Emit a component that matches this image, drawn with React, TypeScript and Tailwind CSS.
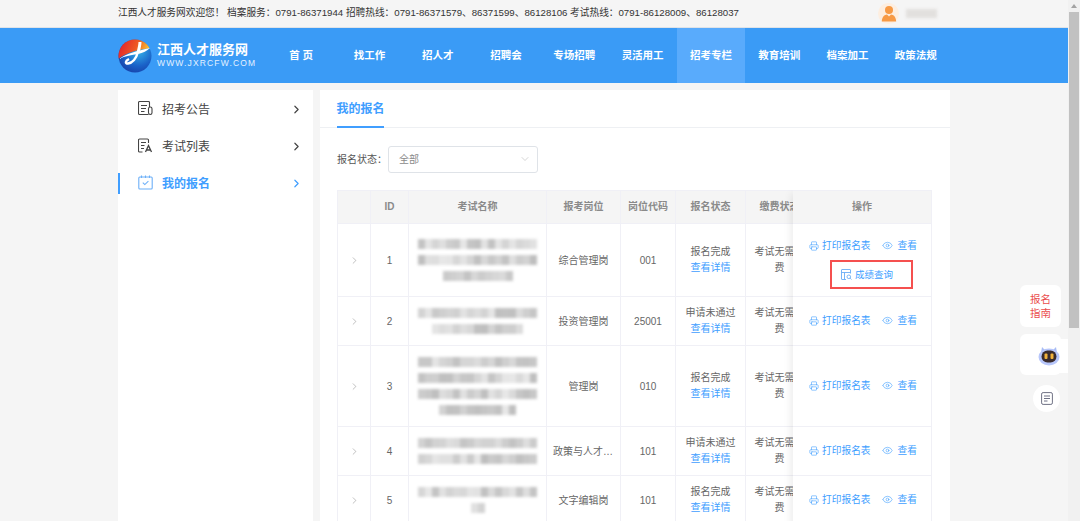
import React from "react";
import { ChevronRight, ChevronDown, Printer, Eye } from "lucide-react";

const NAV = ["首 页", "找工作", "招人才", "招聘会", "专场招聘", "灵活用工", "招考专栏", "教育培训", "档案加工", "政策法规"];

function Pixels({ width, seed }: { width: number; seed: number }) {
  const n = Math.round(width / 7);
  const cells = Array.from({ length: n }, (_, i) => {
    const v = Math.abs(Math.sin((i + 1) * 12.9898 + seed * 78.233) * 43758.5453) % 1;
    const g = Math.round(190 + v * 42);
    return `rgb(${g},${g},${g})`;
  });
  return (
    <div className="flex h-[10px] blur-[1.4px]">
      {cells.map((c, i) => (
        <div key={i} className="w-[7px] h-full" style={{ background: c }} />
      ))}
    </div>
  );
}

function Blurred({ lines, seed }: { lines: number[]; seed: number }) {
  return (
    <div className="flex flex-col items-center gap-[6px]">
      {lines.map((w, i) => (
        <Pixels key={i} width={w} seed={seed + i} />
      ))}
    </div>
  );
}

function Logo() {
  return (
    <svg width="34" height="34" viewBox="0 0 34 34" className="shrink-0">
      <defs>
        <linearGradient id="lg" x1="0.1" y1="0.1" x2="0.9" y2="0.3">
          <stop offset="0" stopColor="#e3242b" />
          <stop offset="0.6" stopColor="#ee5a24" />
          <stop offset="1" stopColor="#f7b733" />
        </linearGradient>
        <radialGradient id="lb" cx="0.6" cy="0.35" r="0.8">
          <stop offset="0" stopColor="#35b4ea" />
          <stop offset="0.55" stopColor="#1a62c8" />
          <stop offset="1" stopColor="#15339c" />
        </radialGradient>
        <clipPath id="lc">
          <circle cx="17" cy="17" r="16.5" />
        </clipPath>
      </defs>
      <g clipPath="url(#lc)">
        <rect x="0" y="0" width="34" height="34" fill="url(#lb)" />
        <path d="M0 0h34v9C22 10 9 13 0 20z" fill="url(#lg)" />
      </g>
      <path d="M1 20C9 14 19 12 32 9c-3 3-7 5-12 6-6 1-13 2-19 5z" fill="#fff" />
      <path d="M22 3c0 3-1 7-2 11" stroke="#fff" strokeWidth="3" fill="none" />
      <path d="M19.5 14c-1 5-5 10-9.5 10.5-3 .3-3-2.5 1-4.5" stroke="#fff" strokeWidth="2.4" fill="none" />
    </svg>
  );
}

function NoticeIcon() {
  return (
    <svg width="15" height="15" viewBox="0 0 15 15" fill="none" stroke="#444" strokeWidth="1.1">
      <path d="M11.5 6V1.5a1 1 0 0 0-1-1h-9a1 1 0 0 0-1 1v11a1 1 0 0 0 1 1h9" />
      <path d="M3 4.5h6M3 7.5h5M3 10.5h3.5" />
      <rect x="10.5" y="6" width="3.5" height="7.5" rx="1.7" />
    </svg>
  );
}

function ListIcon() {
  return (
    <svg width="15" height="15" viewBox="0 0 15 15" fill="none" stroke="#444" strokeWidth="1.1">
      <path d="M10.5 5V2a1 1 0 0 0-1-1h-8a1 1 0 0 0-1 1v11a1 1 0 0 0 1 1h3" />
      <path d="M3 4.5h5M3 7.5h3.5M3 10.5h3" />
      <path d="M7.5 14l3-6.5 3 6.5M8.6 12h3.8" strokeWidth="1.3" />
    </svg>
  );
}

function CheckIcon() {
  return (
    <svg width="15" height="15" viewBox="0 0 15 15" fill="none" stroke="#6db0f8" strokeWidth="1.1">
      <rect x="0.8" y="2" width="13.4" height="12" rx="1" />
      <path d="M3.5 0.6v2.4M7.5 0.6v2.4M11.5 0.6v2.4" />
      <path d="M4.8 7.6l2 2 3.6-3.4" />
    </svg>
  );
}

function ScoreIcon() {
  return (
    <svg width="11" height="11" viewBox="0 0 11 11" fill="none" stroke="#6aaef6" strokeWidth="0.9">
      <path d="M9.5 4.5V1a.5.5 0 0 0-.5-.5H1A.5.5 0 0 0 .5 1v9a.5.5 0 0 0 .5.5h4" />
      <path d="M.5 3.5h9M3.5 3.5v7" />
      <circle cx="7.8" cy="7.8" r="1.8" />
      <path d="M9.2 9.2l1.3 1.3" />
    </svg>
  );
}

function SideItem({ icon, label, active }: { icon: React.ReactNode; label: string; active?: boolean }) {
  return (
    <div className={active ? "h-[37px] flex items-center text-[#409eff] font-bold" : "h-[37px] flex items-center text-[#444]"}>
      <div className={active ? "w-[2px] h-[21px] bg-[#409eff]" : "w-[2px] h-[21px]"} />
      <div className="ml-[18px] w-[15px] h-[15px] shrink-0 -mt-[2px]">{icon}</div>
      <span className="ml-[9px] text-[12px] flex-1">{label}</span>
      <ChevronRight size={13} strokeWidth={2.2} className={active ? "mr-[10px] text-[#409eff]" : "mr-[10px] text-[#444]"} />
    </div>
  );
}

type Row = {
  id: number;
  h: string;
  lines: number[];
  post: string;
  code: string;
  status: string;
};

const ROWS: Row[] = [
  { id: 1, h: "h-[73px]", lines: [119, 119, 70], post: "综合管理岗", code: "001", status: "报名完成" },
  { id: 2, h: "h-[49px]", lines: [119, 91], post: "投资管理岗", code: "25001", status: "申请未通过" },
  { id: 3, h: "h-[81px]", lines: [119, 119, 119, 77], post: "管理岗", code: "010", status: "报名完成" },
  { id: 4, h: "h-[49px]", lines: [119, 119], post: "政策与人才管理岗", code: "101", status: "申请未通过" },
  { id: 5, h: "h-[49px]", lines: [119, 14], post: "文字编辑岗", code: "101", status: "报名完成" },
];

const TH = "border border-[#f0f0f6] bg-[#f5f5f5] text-[10px] font-bold text-[#8a8a8a] text-center p-0 pb-[1px]";
const TD = "border border-[#f0f0f6] text-[10px] text-[#666] text-center p-0";

function ActionLine() {
  return (
    <div className="flex items-center justify-center pl-[2px] text-[#409eff] text-[9.7px]">
      <Printer size={10} strokeWidth={1.4} className="mr-[3px]" />
      <span>打印报名表</span>
      <Eye size={11} strokeWidth={1.3} className="ml-[11px] mr-[5px]" />
      <span>查看</span>
    </div>
  );
}

export default function App() {
  return (
    <div className="h-[521px] w-[1080px] overflow-hidden flex bg-[#f5f5f5] font-['Liberation_Sans','Noto_Sans_CJK_SC',sans-serif] relative">
      <div className="w-[1068px] shrink-0 flex flex-col">
        {/* top bar */}
        <div className="h-[28px] shrink-0 border-b border-[#dfe3e8] flex items-center justify-between pl-[118px] pr-[131px] text-[9.68px] text-[#333]">
          <span className="whitespace-nowrap">
            江西人才服务网欢迎您！ 档案服务：0791-86371944 招聘热线：0791-86371579、86371599、86128106 考试热线：0791-86128009、86128037
          </span>
          <div className="flex items-center">
            <div className="w-[21px] h-[21px] rounded-full bg-[#fdeee0] flex items-center justify-center">
              <svg width="16" height="17" viewBox="0 0 16 17">
                <circle cx="8" cy="5" r="4" fill="#f79a45" />
                <path d="M0.8 16.5C1 12 3.5 9.8 6 9.6L8 11.5l2-1.9c2.5.2 5 2.4 5.2 6.9z" fill="#f79a45" />
              </svg>
            </div>
            <div className="ml-[7px]">
              <div className="w-[31px] h-[9px] bg-[#e2e0de] blur-[1.5px]" />
            </div>
          </div>
        </div>

        {/* nav */}
        <div className="h-[55px] shrink-0 bg-[#3a9bf6] flex pl-[118px]">
          <div className="w-[149px] shrink-0 flex items-center">
            <Logo />
            <div className="ml-[5px] text-white">
              <div className="text-[13px] font-bold leading-[15px] whitespace-nowrap">江西人才服务网</div>
              <div className="text-[8.5px] leading-[12px] tracking-[1.15px] whitespace-nowrap text-[#e4f1ff]">WWW.JXRCFW.COM</div>
            </div>
          </div>
          <div className="flex">
            {NAV.map((n) => (
              <div
                key={n}
                className={
                  n === "招考专栏"
                    ? "w-[68.3px] flex items-center justify-center text-white text-[10.5px] font-bold bg-[#59abfc] whitespace-pre"
                    : "w-[68.3px] flex items-center justify-center text-white text-[10.5px] font-bold whitespace-pre"
                }
              >
                {n}
              </div>
            ))}
          </div>
        </div>

        {/* body */}
        <div className="flex-1 min-h-0 flex pl-[118px] pt-[7px] gap-[7px]">
          <div className="w-[195px] bg-white shrink-0 pt-[1px]">
            <SideItem icon={<NoticeIcon />} label="招考公告" />
            <SideItem icon={<ListIcon />} label="考试列表" />
            <SideItem icon={<CheckIcon />} label="我的报名" active />
          </div>

          <div className="w-[630px] bg-white shrink-0">
            <div className="h-[38px] border-b border-[#eef0f3] pl-[17px] flex">
              <div className="w-[47px] h-[38px] pt-[2px] border-b-2 border-[#409eff] text-[#409eff] text-[12px] font-bold flex items-center justify-center whitespace-nowrap">
                我的报名
              </div>
            </div>

            <div className="px-[17px] pt-[17px]">
              <div className="flex items-center h-[28px]">
                <span className="text-[10px] text-[#555] w-[51px] whitespace-nowrap">报名状态：</span>
                <div className="w-[150px] h-[27px] border border-[#dfe3e8] rounded-[3px] flex items-center justify-between pl-[10px] pr-[6px] text-[10px] text-[#8a8a8a]">
                  <span>全部</span>
                  <ChevronDown size={12} strokeWidth={1} className="text-[#aaa]" />
                </div>
              </div>

              <div className="mt-[17px] flex w-[595px] h-[400px] overflow-hidden">
                <div className="w-[456px] shrink-0 overflow-hidden">
                  <table className="table-fixed border-collapse w-[476px]">
                    <colgroup>
                      <col className="w-[33px]" />
                      <col className="w-[38px]" />
                      <col className="w-[138px]" />
                      <col className="w-[74px]" />
                      <col className="w-[55px]" />
                      <col className="w-[70px]" />
                      <col className="w-[68px]" />
                    </colgroup>
                    <thead>
                      <tr className="h-[33px]">
                        <th className={TH}></th>
                        <th className={TH}>ID</th>
                        <th className={TH}>考试名称</th>
                        <th className={TH}>报考岗位</th>
                        <th className={TH}>岗位代码</th>
                        <th className={TH}>报名状态</th>
                        <th className={TH}>缴费状态</th>
                      </tr>
                    </thead>
                    <tbody>
                      {ROWS.map((r) => (
                        <tr key={r.id} className={r.h}>
                          <td className={TD}>
                            <ChevronRight size={11} strokeWidth={1} className="mx-auto text-[#777]" />
                          </td>
                          <td className={TD}>{r.id}</td>
                          <td className={TD}>
                            <Blurred lines={r.lines} seed={r.id * 7} />
                          </td>
                          <td className={TD}>
                            <div className="px-[6px] truncate">{r.post}</div>
                          </td>
                          <td className={TD}>{r.code}</td>
                          <td className={TD}>
                            <div className="leading-[16px]">{r.status}</div>
                            <div className="leading-[16px] text-[#409eff]">查看详情</div>
                          </td>
                          <td className={TD}>
                            <div className="leading-[16px] px-[8px]">考试无需缴费</div>
                          </td>
                        </tr>
                      ))}
                    </tbody>
                  </table>
                </div>

                <div className="w-[139px] shrink-0 relative z-10 shadow-[-6px_0_8px_-4px_rgba(0,0,0,0.08)]">
                  <table className="table-fixed border-collapse w-[139px]">
                    <thead>
                      <tr className="h-[33px]">
                        <th className="bg-[#f5f5f5] border-y border-r border-[#f0f0f6] text-[10px] font-bold text-[#8a8a8a] text-center p-0 pb-[1px]">操作</th>
                      </tr>
                    </thead>
                    <tbody>
                      {ROWS.map((r) => (
                        <tr key={r.id} className={r.h}>
                          <td className={r.id === 1 ? "border-y border-r border-[#f0f0f6] p-0 pt-[8px]" : "border-y border-r border-[#f0f0f6] p-0"}>
                            <ActionLine />
                            {r.id === 1 && (
                              <div className="mt-[7px] ml-[37px] w-[83px] h-[29px] border-2 border-[#f5504f] flex items-center justify-center pr-[9px] text-[#409eff] text-[9.5px]">
                                <ScoreIcon />
                                <span className="ml-[3px]">成绩查询</span>
                              </div>
                            )}
                          </td>
                        </tr>
                      ))}
                    </tbody>
                  </table>
                </div>
              </div>
            </div>
          </div>
        </div>
      </div>

      {/* scrollbar */}
      <div className="w-[12px] shrink-0 bg-[#f1f1f1] flex flex-col items-center">
        <div className="h-[12px] flex items-center justify-center">
          <div className="w-0 h-0 border-x-[3px] border-x-transparent border-b-[4px] border-b-[#a3a3a3]" />
        </div>
        <div className="w-[10px] h-[316px] bg-[#c1c1c1]" />
      </div>

      {/* floating widgets */}
      <div className="absolute left-[1020px] top-[285px] w-[41px] h-[42px] rounded-[6px] bg-white flex flex-col items-center justify-center text-[10.5px] leading-[14px] text-[#ea4c4c]">
        <span>报名</span>
        <span>指南</span>
      </div>
      <div className="absolute left-[1020px] top-[334px] w-[41px] h-[41px] rounded-[6px] bg-white" />
      <div className="absolute left-[1030px] top-[339px] w-[38px] h-[34px] rounded-l-[17px] bg-white flex items-center justify-center">
        <svg width="22" height="20" viewBox="0 0 22 20">
          <path d="M4 1l3 3h8l3-3 1 6H3z" fill="#a9bdf5" />
          <ellipse cx="11" cy="11" rx="10.5" ry="8.5" fill="#b7c6fa" />
          <rect x="3.5" y="4.5" width="15" height="12" rx="6" fill="#3a2c2e" />
          <rect x="6.5" y="7.5" width="3" height="5.5" rx="1" fill="#f2b23a" />
          <rect x="12.5" y="7.5" width="3" height="5.5" rx="1" fill="#f2b23a" />
        </svg>
      </div>
      <div className="absolute left-[1033px] top-[385px] w-[27px] h-[27px] rounded-full bg-white flex items-center justify-center">
        <svg width="12" height="13" viewBox="0 0 12 13" fill="none" stroke="#6f7184" strokeWidth="1">
          <rect x="0.6" y="0.6" width="10.8" height="11.8" rx="1.5" />
          <path d="M3 4h6M3 6.5h6M3 9h3.5" />
        </svg>
      </div>
    </div>
  );
}
